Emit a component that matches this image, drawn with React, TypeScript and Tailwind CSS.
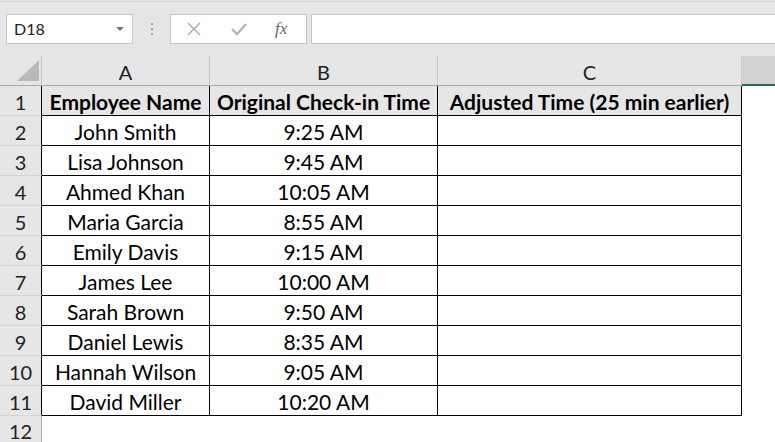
import React from 'react';

const rows = [
  ['John Smith', '9:25 AM'],
  ['Lisa Johnson', '9:45 AM'],
  ['Ahmed Khan', '10:05 AM'],
  ['Maria Garcia', '8:55 AM'],
  ['Emily Davis', '9:15 AM'],
  ['James Lee', '10:00 AM'],
  ['Sarah Brown', '9:50 AM'],
  ['Daniel Lewis', '8:35 AM'],
  ['Hannah Wilson', '9:05 AM'],
  ['David Miller', '10:20 AM'],
];

const font = { fontFamily: 'Lato, "Liberation Sans", sans-serif' };

export default function App() {
  return (
    <div
      className="h-[442px] w-[775px] overflow-hidden bg-[#e6e6e6] text-[#000]"
      style={font}
    >
      {/* top strip */}
      <div className="h-[14px] pt-px">
        <div className="border-t border-[#d5d5d5]" />
      </div>

      {/* formula bar */}
      <div className="flex h-[30px] pl-[6px]">
        <div className="flex w-[127px] items-center justify-between border border-[#c6c6c6] bg-white pl-[7px] pr-[8px]">
          <span className="text-[16px] text-[#222]">D18</span>
          <span className="h-0 w-0 border-x-[4px] border-t-[4px] border-x-transparent border-t-[#777]" />
        </div>
        <div className="flex w-[37px] flex-col items-center justify-center gap-[3px]">
          <span className="h-[2px] w-[2px] bg-[#a0a0a0]" />
          <span className="h-[2px] w-[2px] bg-[#a0a0a0]" />
          <span className="h-[2px] w-[2px] bg-[#a0a0a0]" />
        </div>
        <div className="flex w-[137px] items-center border border-[#c6c6c6] bg-white">
          <svg width="14" height="14" viewBox="0 0 14 14" className="ml-[16px]">
            <path d="M1 1 L13 13 M13 1 L1 13" stroke="#a6a6a6" strokeWidth="1.3" fill="none" />
          </svg>
          <svg width="16" height="14" viewBox="0 0 16 14" className="ml-[30px]">
            <path d="M1 7 L6 12 L15 2" stroke="#b4b4b4" strokeWidth="2.4" fill="none" />
          </svg>
          <span
            className="ml-[28px] text-[17px] italic text-[#666]"
            style={{ fontFamily: '"Liberation Serif", serif' }}
          >
            fx
          </span>
        </div>
        <div className="ml-[4px] flex-1 border-y border-l border-[#c6c6c6] bg-white" />
      </div>

      <div className="h-[12px]" />

      {/* column headers */}
      <div className="flex h-[30px] border-b border-[#ababab] text-[20px] text-[#222]">
        <div className="flex w-[42px] items-end justify-end border-r border-[#c6c6c6] pb-[4px] pr-[2px]">
          <svg width="22" height="21" viewBox="0 0 22 21">
            <path d="M22 0 L22 21 L0 21 Z" fill="#b9b9b9" />
          </svg>
        </div>
        <div className="flex w-[168px] items-center justify-center border-r border-[#c6c6c6] pt-[2px]">A</div>
        <div className="flex w-[228px] items-center justify-center border-r border-[#c6c6c6] pt-[2px]">B</div>
        <div className="flex w-[304px] items-center justify-center border-r border-[#c6c6c6] pt-[2px]">C</div>
        <div className="-mb-px flex-1 border-b-2 border-[#217346] bg-[#d2d2d2]" />
      </div>

      {/* header row */}
      <div className="flex h-[30px] text-[21px]">
        <div className="flex w-[42px] items-center justify-center border-r border-b border-r-black border-b-[#d4d4d4] pt-[2px] text-[20px] text-[#222]">
          1
        </div>
        <div className="flex w-[168px] items-center justify-center border-r border-b border-black bg-[#e7e6e6] pt-[2px] font-bold">
          Employee Name
        </div>
        <div className="flex w-[228px] items-center justify-center border-r border-b border-black bg-[#e7e6e6] pt-[2px] font-bold">
          Original Check-in Time
        </div>
        <div className="flex w-[304px] items-center justify-center border-r border-b border-black bg-[#e7e6e6] pt-[2px] font-bold">
          Adjusted Time (25 min earlier)
        </div>
        <div className="flex-1 bg-white" />
      </div>

      {rows.map(([name, time], i) => (
        <div key={name} className="flex h-[30px] text-[21px]">
          <div className="flex w-[42px] items-center justify-center border-r border-b border-r-black border-b-[#d4d4d4] pt-[2px] text-[20px] text-[#222]">
            {i + 2}
          </div>
          <div className="flex w-[168px] items-center justify-center border-r border-b border-black bg-white pt-[2px]">
            {name}
          </div>
          <div className="flex w-[228px] items-center justify-center border-r border-b border-black bg-white pt-[2px]">
            {time}
          </div>
          <div className="w-[304px] border-r border-b border-black bg-white" />
          <div className="flex-1 bg-white" />
        </div>
      ))}

      <div className="flex h-[26px]">
        <div className="flex w-[42px] items-start justify-center border-r border-[#ababab] pt-[5px] text-[20px] leading-none text-[#222]">
          12
        </div>
        <div className="flex-1 bg-white" />
      </div>
    </div>
  );
}
